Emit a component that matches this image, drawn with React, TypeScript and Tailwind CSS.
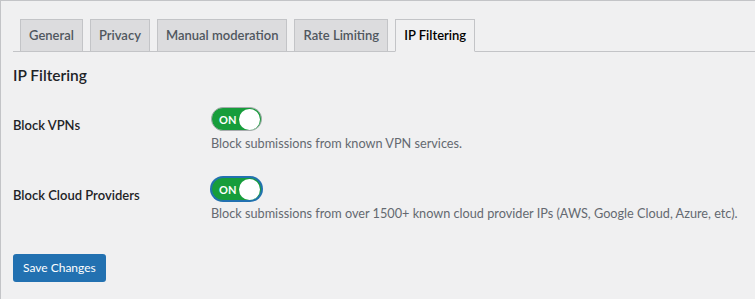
import React from "react";

const tabs = ["General", "Privacy", "Manual moderation", "Rate Limiting", "IP Filtering"];

const Toggle = ({ focused }: { focused?: boolean }) => (
  <div
    className={`flex items-center justify-between w-[51px] h-[24px] rounded-full bg-[#179d3b] pl-[7px] pr-[1px] border ${
      focused ? "border-[#2271b1] ring-1 ring-[#2271b1]" : "border-[#a7aaad]"
    }`}
  >
    <span className="text-[11px] font-bold text-white leading-none">ON</span>
    <span className="w-[21px] h-[21px] rounded-full bg-white" />
  </div>
);

const Row = ({
  label,
  desc,
  focused
}: {
  label: string;
  desc: string;
  focused?: boolean;
}) => (
  <div className="flex">
    <div className="w-[198px] pt-[8px] text-[13px] leading-[20px] font-semibold text-[#1d2327]">
      {label}
    </div>
    <div>
      <Toggle focused={focused} />
      <p className="mt-[3px] text-[12.7px] leading-[19px] text-[#646970]">{desc}</p>
    </div>
  </div>
);

const App = () => {
  return (
    <div
      className="h-[299px] bg-[#f0f0f1] border-l border-t border-[#c3c4c7] overflow-hidden"
      style={{ fontFamily: "Lato, 'Liberation Sans', sans-serif" }}
    >
      <div className="ml-[12px] mt-[18px] flex border-b border-[#c3c4c7]">
        {tabs.map((t) => {
          const active = t === "IP Filtering";
          return (
            <div
              key={t}
              className={`ml-[7px] -mb-px h-[33px] px-[8px] flex items-center border border-[#c3c4c7] text-[13px] font-semibold ${
                active
                  ? "bg-[#f0f0f1] border-b-[#f0f0f1] text-black"
                  : "bg-[#dcdcde] text-[#50575e]"
              }`}
            >
              {t}
            </div>
          );
        })}
      </div>
      <div className="pl-[12px]">
        <h2 className="mt-[12px] text-[15.5px] leading-[22px] font-semibold text-[#1d2327]">
          IP Filtering
        </h2>
        <div className="mt-[21px] flex flex-col gap-[24px]">
          <Row
            label="Block VPNs"
            desc="Block submissions from known VPN services."
          />
          <Row
            label="Block Cloud Providers"
            desc="Block submissions from over 1500+ known cloud provider IPs (AWS, Google Cloud, Azure, etc)."
            focused
          />
        </div>
        <button className="mt-[31px] h-[28px] px-[10px] rounded-[3px] bg-[#2271b1] text-white text-[12px]">
          Save Changes
        </button>
      </div>
    </div>
  );
};

export default App;
